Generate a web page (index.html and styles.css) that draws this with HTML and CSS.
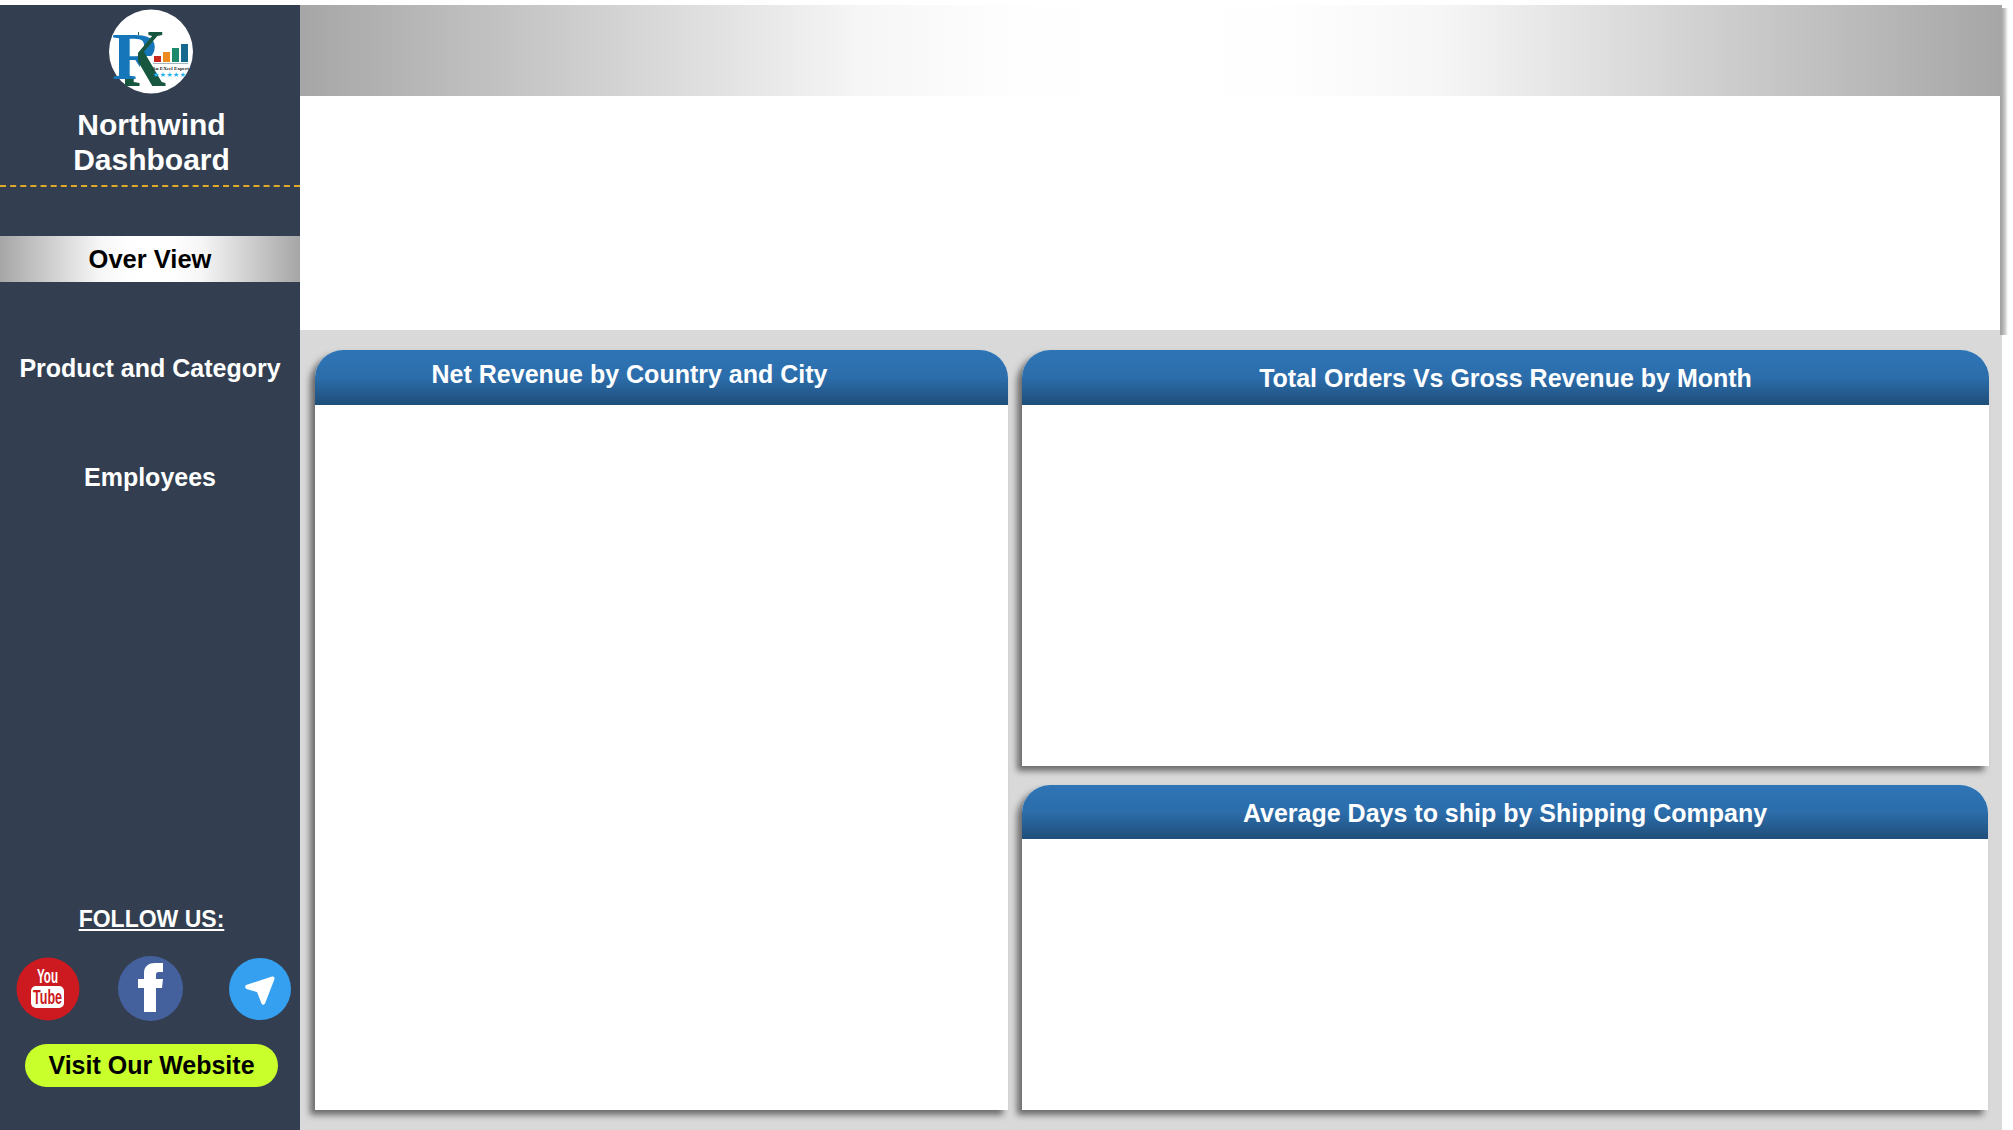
FILE: index.html
```html
<!DOCTYPE html>
<html lang="en">
<head>
<meta charset="utf-8">
<title>Northwind Dashboard</title>
<link rel="stylesheet" href="styles.css">
</head>
<body>
<div class="app">
  <aside class="sidebar">
    <div class="logo">
      <svg viewBox="0 0 84 85" width="84" height="85">
        <defs>
          <clipPath id="clipR"><path d="M0 0H84V47H31V85H0Z"/></clipPath>
          <clipPath id="clipK"><path d="M29 0H84V85H16V70H29Z"/></clipPath>
        </defs>
        <circle cx="42" cy="42.500" r="42" fill="#fff"/>
        <text class="logo-r" x="3" y="70" textLength="50" lengthAdjust="spacingAndGlyphs" clip-path="url(#clipR)">R</text>
        <text class="logo-k" x="9" y="77" textLength="48" lengthAdjust="spacingAndGlyphs" clip-path="url(#clipK)">K</text>
        <rect x="45" y="47" width="7" height="6" fill="#c8281e"/>
        <rect x="54" y="43" width="7" height="10" fill="#ec8c1e"/>
        <rect x="63" y="39" width="7" height="14" fill="#1d8a6c"/>
        <rect x="72" y="35" width="7" height="18" fill="#17688f"/>
        <rect x="44" y="54" width="35" height="1" fill="#9fb6c4"/>
        <text class="logo-sub" x="43" y="61" textLength="37" lengthAdjust="spacingAndGlyphs">An EXcel Expert</text>
        <text class="logo-stars" x="44" y="67.500" textLength="33" lengthAdjust="spacingAndGlyphs">★★★★★</text>
      </svg>
    </div>
    <h1 class="brand">Northwind<br>Dashboard</h1>
    <div class="divider"></div>
    <nav class="nav">
      <a class="nav-item active">Over View</a>
      <a class="nav-item">Product and Category</a>
      <a class="nav-item">Employees</a>
    </nav>
    <div class="follow">
      <div class="follow-title">FOLLOW US:</div>
      <div class="socials">
        <svg class="yt" viewBox="0 0 64 64" width="64" height="64">
          <circle cx="32" cy="32" r="31.500" fill="#cc1a20"/>
          <text class="yt-you" x="21" y="26" textLength="21" lengthAdjust="spacingAndGlyphs">You</text>
          <rect x="15" y="29" width="33" height="22" rx="5" fill="#fff"/>
          <text class="yt-tube" x="17" y="47" textLength="29" lengthAdjust="spacingAndGlyphs">Tube</text>
        </svg>
        <svg class="fb" viewBox="0 0 65 65" width="65" height="65">
          <circle cx="32.500" cy="32.500" r="32.500" fill="#45619d"/>
          <path d="M26 56V32H20V23H26V17C26 10 31 7 37 7H45V16H41C38.500 16 38 17 38 19V23H45L44 32H38V56Z" fill="#fff"/>
        </svg>
        <svg class="tg" viewBox="0 0 62 62" width="62" height="62">
          <circle cx="31" cy="31" r="31" fill="#36a0f0"/>
          <path d="M17 27 43 18.500Q46 18 45.500 21L36 45.500Q34 48 32.500 45.500L28 34 17.500 31Q15 29 17 27Z" fill="#fff"/>
        </svg>
      </div>
      <a class="visit">Visit Our Website</a>
    </div>
  </aside>
  <main class="main">
    <div class="top">
      <div class="banner"></div>
      <div class="blank"></div>
    </div>
    <div class="grid">
      <section class="card card-tall">
        <h2 class="card-head head-offset">Net Revenue by Country and City</h2>
      </section>
      <section class="card">
        <h2 class="card-head head-low">Total Orders Vs Gross Revenue by Month</h2>
      </section>
      <section class="card card-narrow">
        <h2 class="card-head head-short head-low">Average Days to ship by Shipping Company</h2>
      </section>
    </div>
  </main>
</div>
</body>
</html>
```
FILE: styles.css
```css
* { box-sizing: border-box; }
html, body { margin: 0; padding: 0; background: #fff; overflow: hidden; }
body { font-family: "Liberation Sans", Arial, sans-serif; }

.app { display: flex; height: 1125px; margin-top: 5px; width: 2002px; }

/* Sidebar */
.sidebar { width: 300px; flex: none; background: #333f50; display: flex; flex-direction: column; color: #fff; }
.logo { height: 85px; margin-top: 4px; display: flex; justify-content: center; padding-left: 2px; }
.logo svg { display: block; overflow: hidden; }
.logo-k { font: 700 82px "Liberation Serif", serif; fill: #17573f; }
.logo-r { font: 700 68px "Liberation Serif", serif; fill: #1577ba; }
.logo-sub { font: 700 5px "Liberation Serif", serif; fill: #222; }
.logo-stars { font: 7px "DejaVu Sans", sans-serif; fill: #27b4ee; }

.brand { margin: 13px 0 0; font-size: 30px; line-height: 35px; font-weight: 700; text-align: center; padding-left: 3px; }
.divider { margin-top: 8px; border-top: 2px dashed #e0a92a; }

.nav { display: flex; flex-direction: column; }
.nav-item { display: flex; align-items: center; justify-content: center; height: 46px; font-size: 25px; font-weight: 700; color: #fff; margin-top: 63px; }
.nav-item.active { margin-top: 49px; color: #000; font-size: 25.500px; background: linear-gradient(90deg, #a6a6a6 0%, #cfcfcf 17%, #f6f6f6 33%, #fefefe 42%, #fff 50%, #fefefe 58%, #f6f6f6 67%, #cfcfcf 83%, #a6a6a6 100%); }

.follow { margin-top: auto; padding-bottom: 43px; display: flex; flex-direction: column; align-items: center; }
.follow-title { font-size: 23px; line-height: 26px; font-weight: 700; text-decoration: underline; padding-left: 3px; }
.socials { align-self: stretch; display: flex; align-items: center; margin-top: 24px; padding-left: 16px; }
.socials svg { display: block; flex: none; }
.fb { margin-left: 38px; }
.tg { margin-left: 46px; }
.yt-you, .yt-tube { font-family: "Liberation Sans", sans-serif; font-weight: 700; }
.yt-you { font-size: 21px; fill: #fff; }
.yt-tube { font-size: 21px; fill: #cc1a20; }
.visit { margin-top: 23px; width: 253px; height: 43px; margin-left: 3px; border-radius: 22px; background: #c9ff2b; color: #000; font-size: 25px; font-weight: 700; display: flex; align-items: center; justify-content: center; }

/* Main */
.main { width: 1702px; flex: none; display: flex; flex-direction: column; background: #d9d9d9; }
.top { height: 325px; flex: none; display: flex; flex-direction: column; background: #fff; position: relative; }
.top::after { content: ""; position: absolute; top: 3px; bottom: -5px; right: -6px; width: 8px; background: linear-gradient(90deg, #a0a0a0 0%, #adadad 30%, #cdcdcd 65%, #fff 100%); }
.banner { height: 91px; background: linear-gradient(90deg, #a6a6a6 0%, #cfcfcf 17%, #f6f6f6 33%, #fefefe 42%, #fff 50%, #fefefe 58%, #f6f6f6 67%, #cfcfcf 83%, #a6a6a6 100%); position: relative; z-index: 1; }
.blank { flex: 1; background: #fff; }

.grid { flex: 1; display: grid; grid-template-columns: 693px 967px; grid-template-rows: 416px 325px; gap: 19px 14px; padding: 20px 13px 19px 15px; }
.card { background: #fff; border-radius: 28px 28px 0 0; box-shadow: -5px 5px 6px rgba(0,0,0,.5); }
.card-tall { grid-row: 1 / span 2; }
.card-narrow { margin-right: 1px; }
.card-head { margin: 0; height: 55px; border-radius: 28px 28px 0 0; background: linear-gradient(180deg, #2e75b6 0%, #2c6dab 50%, #1f4e79 100%); color: #fff; font-size: 25px; font-weight: 700; display: flex; align-items: center; justify-content: center; }
.head-offset { padding: 0 64px 6px 0; }
.head-low { padding-top: 2px; }
.head-short { height: 54px; }
```
